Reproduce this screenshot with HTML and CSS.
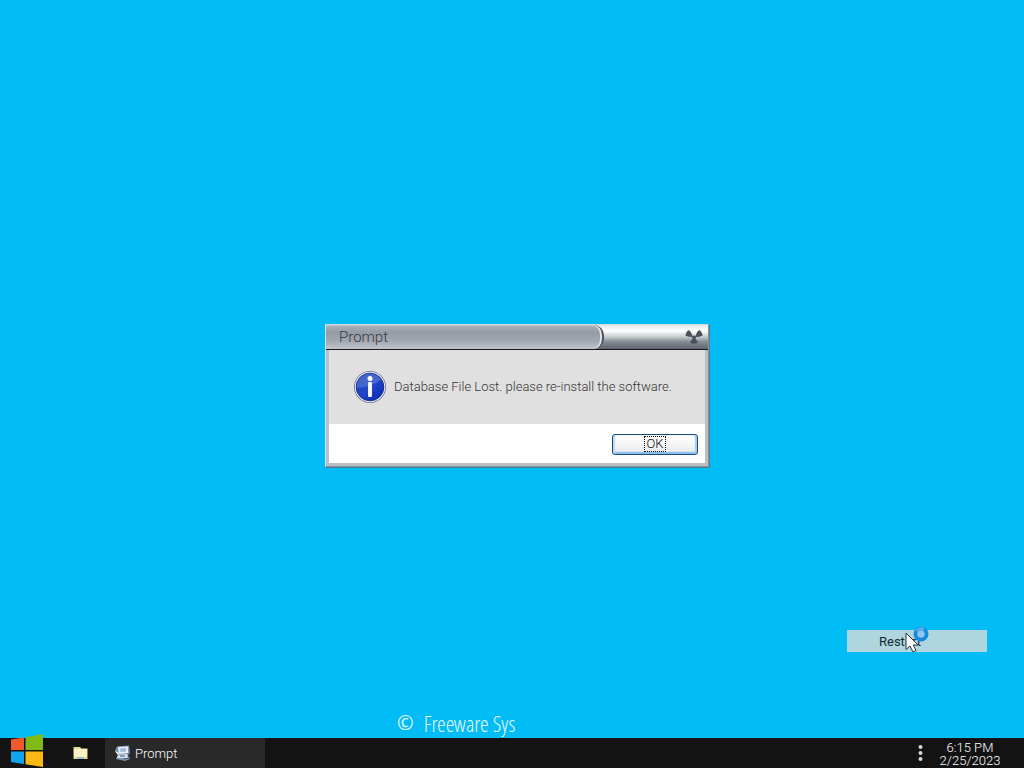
FILE: index.html
```html
<!DOCTYPE html>
<html lang="en">
<head>
<meta charset="utf-8">
<title>Prompt</title>
<link rel="stylesheet" href="styles.css">
</head>
<body>
<main class="desktop">
  <section class="dialog" role="dialog" aria-labelledby="dialog-title" aria-describedby="dialog-text">
    <header class="titlebar">
      <h1 class="title" id="dialog-title">Prompt</h1>
      <button class="close" type="button" aria-label="Close">
        <svg width="18" height="16" viewBox="0 0 18 16">
          <g fill="#4c5159"><path d="M.5 6.800Q.8 2.800 3.800 1Q6.800 3 7.300 6.500L8 8Q4 8.200.5 6.800Z"/><path d="M10.700 6.500Q11.200 3 14.200 1Q17.200 2.800 17.500 6.800Q14 8.200 10 8Z"/><path d="M7.300 10H10.700L13 13.500Q9 16 5 13.500Z"/><circle cx="9" cy="8.500" r="2"/></g>
        </svg>
      </button>
    </header>
    <div class="content">
      <div class="message">
        <svg width="34" height="34" viewBox="0 0 34 34" aria-hidden="true">
          <defs>
            <linearGradient id="blue" x1="0" y1="0" x2="1" y2="1"><stop offset="0" stop-color="#2440a8"/><stop offset=".5" stop-color="#2146c8"/><stop offset="1" stop-color="#0b22b4"/></linearGradient>
          </defs>
          <circle cx="17" cy="17" r="16" fill="#6a7290"/>
          <circle cx="17" cy="17" r="15.200" fill="#e8ebf2"/>
          <circle cx="17" cy="17" r="13.800" fill="url(#blue)" stroke="#172c88"/>
          <path d="M3.800 18A13.200 13.200 0 0 1 28 9.500Q20 17 3.800 18Z" fill="#6c8fe0" opacity=".45"/>
          <circle cx="17" cy="8.500" r="2.500" fill="#fff"/>
          <rect x="15" y="12" width="4" height="15" rx="1" fill="#f2f5ff"/>
        </svg>
        <p class="text" id="dialog-text">Database File Lost. please re-install the software.</p>
      </div>
      <footer class="actions"><button class="ok" type="button"><span class="focus">OK</span></button></footer>
    </div>
  </section>

  <button class="restart" type="button">Restart</button>
  <svg class="cursor" width="32" height="30" viewBox="0 0 32 30" aria-hidden="true">
    <circle cx="19" cy="10" r="5.500" fill="none" stroke="#168bdd" stroke-width="4"/>
    <circle cx="19" cy="10" r="3.500" fill="#8cc8ee"/>
    <path d="M14.500 7A5.500 5.500 0 0 1 22 5.500" fill="none" stroke="#4faeea" stroke-width="3"/>
    <path d="M4 9V25.500L8 22L11 28L14 26.500L11.200 21H16Z" fill="#fff" stroke="#28363c"/>
  </svg>
  <p class="brand"><span class="copy">©</span><span>Freeware Sys</span></p>
</main>

<footer class="taskbar">
  <button class="start" type="button" aria-label="Start">
    <svg width="34" height="34" viewBox="0 0 34 34">
      <path d="M1 5.500L14 3.500V16H1Z" fill="#f05a2a"/>
      <path d="M15.500 3.300L33 0V16H15.500Z" fill="#7fba18"/>
      <path d="M1 17.500H14V30L1 28Z" fill="#12a3ed"/>
      <path d="M15.500 17.500H33V33L15.500 30.200Z" fill="#fdb813"/>
    </svg>
  </button>
  <button class="folder" type="button" aria-label="File Explorer">
    <svg width="15" height="14" viewBox="0 0 15 14">
      <path d="M.5 1H7L8.500 2.500H14.500V13H.5Z" fill="#e8dc9c"/><path d="M1 3H14V11H1Z" fill="#faf3c8"/><path d="M4 11H11V13H4Z" fill="#9fc4bd"/>
    </svg>
  </button>
  <button class="task" type="button">
    <svg width="16" height="16" viewBox="0 0 16 16" aria-hidden="true">
      <path d="M2 1.500L14 .5L15 8L13 10L15 14L10 16L1 14L3 10L0 6Z" fill="#7f93b5"/>
      <path d="M3 2L13 1.500V8L4 9Z" fill="#e7eef8"/><path d="M5 3.500L11 3V6.500L5.500 7Z" fill="#9fb8dc"/>
      <path d="M3 10L12 9L13 13L2 13Z" fill="#dbe3ef"/><path d="M0 6L4 8L3 10Z" fill="#fff"/><path d="M5 11H10M9 14L14 13" stroke="#47546f"/>
    </svg>
    <span>Prompt</span>
  </button>
  <button class="more" type="button" aria-label="Tray">
    <svg width="5" height="18" viewBox="0 0 5 18" fill="#d8d8d8"><circle cx="2.500" cy="3" r="2"/><circle cx="2.500" cy="9" r="2"/><circle cx="2.500" cy="15" r="2"/></svg>
  </button>
  <div class="clock"><time>6:15 PM</time><time>2/25/2023</time></div>
</footer>
</body>
</html>
```
FILE: styles.css
```css
* {
  box-sizing: border-box;
}

body {
  display: flex;
  flex-direction: column;
  min-height: 100vh;
  margin: 0;
  background: #02bcf5;
  font-family: Roboto, "Liberation Sans", sans-serif;
  font-size: 13px;
  font-weight: 300;
  color: #111;
}

button {
  padding: 0;
  border: 0;
  background: none;
  font: inherit;
  color: inherit;
}

svg {
  display: block;
  flex: none;
}

h1,
p {
  margin: 0;
}

.desktop {
  position: relative;
  flex: 1;
  display: flex;
  flex-direction: column;
  justify-content: flex-end;
  overflow: hidden;
}

.dialog {
  position: absolute;
  left: 325px;
  top: 324px;
  width: 384px;
  border: 1px solid #8b919b;
  border-top-color: #c8dbe2;
  border-left-color: #d9e3e8;
  background: #b9bec7;
  box-shadow: 1px 1px 0 #4d8199;
}

.titlebar {
  display: flex;
  align-items: stretch;
  justify-content: space-between;
  height: 25px;
  border-bottom: 1px solid #151822;
  background: linear-gradient(#e4e7ea 0, #fff 25%, #c9cdd2 48%, #858b94 70%, #5e656f 100%);
}

.title {
  width: 278px;
  padding-left: 13px;
  border-right: 2px solid #4e535b;
  border-radius: 0 10px 10px 0;
  background: linear-gradient(#aeb3bb, #959ba4 30%, #a2a7b0 65%, #c0c4ca);
  box-shadow: inset -2px 0 0 #dfe2e6, inset 0 1px 0 #c2c6cc;
  font-size: 15px;
  line-height: 25px;
  font-weight: 300;
  color: #343a44;
}

.close {
  display: flex;
  align-items: center;
  padding-right: 5px;
}

.content {
  margin: 0 3px;
  border-bottom: 3px solid #b9bec7;
  background: #fff;
}

.message {
  display: flex;
  align-items: center;
  gap: 7px;
  height: 74px;
  padding: 0 24px;
  background: #e0e0e0;
}

.text {
  padding-bottom: 2px;
  color: #333;
  white-space: nowrap;
}

.actions {
  display: flex;
  justify-content: flex-end;
  padding: 10px 7px 8px;
}

.ok {
  display: flex;
  align-items: center;
  justify-content: center;
  width: 86px;
  height: 21px;
  padding-bottom: 2px;
  border: 1px solid #1b4c7c;
  border-radius: 3px;
  background: linear-gradient(#fff, #f6f6f6 50%, #e2e6ea);
  box-shadow: inset 2px 0 1px #b9dcf5, inset -2px 0 1px #a3cdef, inset 0 -2px 1px #86bae8;
}

.focus {
  padding: 0 1px;
  border: 1px dotted #111;
  line-height: 14px;
}

.restart {
  position: absolute;
  right: 37px;
  bottom: 86px;
  width: 140px;
  height: 22px;
  padding-left: 32px;
  background: #afd6df;
  font-weight: 400;
  text-align: left;
  color: #14282e;
}

.cursor {
  position: absolute;
  right: 90px;
  bottom: 84px;
}

.brand {
  display: flex;
  align-items: center;
  gap: 10px;
  margin-left: 397px;
  padding-bottom: 2px;
  font-family: "Open Sans Condensed Light", Roboto, sans-serif;
  font-size: 22px;
  line-height: 26px;
  font-weight: 300;
  color: #e2f8ff;
}

.copy {
  font-family: "Open Sans", sans-serif;
  font-size: 20px;
  font-weight: 400;
}

.taskbar {
  display: flex;
  align-items: center;
  height: 30px;
  background: #131313;
  color: #fff;
}

.start {
  z-index: 1;
  margin: -4px 29px 0 10px;
}

.folder {
  margin-right: 17px;
}

.task {
  display: flex;
  align-items: center;
  gap: 4px;
  width: 160px;
  height: 30px;
  padding-left: 10px;
  background: #292929;
}

.more {
  margin-left: auto;
}

.clock {
  display: flex;
  flex-direction: column;
  align-items: center;
  width: 58px;
  margin: 2px 25px 0 18px;
  line-height: 13px;
}
```
